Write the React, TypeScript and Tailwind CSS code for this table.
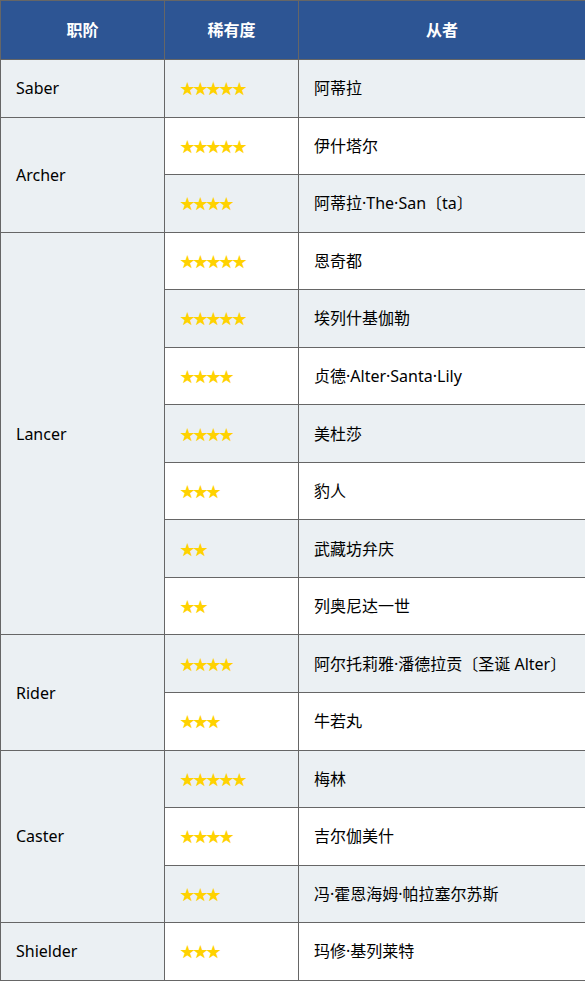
import React from 'react'

type Row = { cls?: string; span?: number; stars: number; name: string }

const rows: Row[] = [
  { cls: 'Saber', span: 1, stars: 5, name: '阿蒂拉' },
  { cls: 'Archer', span: 2, stars: 5, name: '伊什塔尔' },
  { stars: 4, name: '阿蒂拉·The·San〔ta〕' },
  { cls: 'Lancer', span: 7, stars: 5, name: '恩奇都' },
  { stars: 5, name: '埃列什基伽勒' },
  { stars: 4, name: '贞德·Alter·Santa·Lily' },
  { stars: 4, name: '美杜莎' },
  { stars: 3, name: '豹人' },
  { stars: 2, name: '武藏坊弁庆' },
  { stars: 2, name: '列奥尼达一世' },
  { cls: 'Rider', span: 2, stars: 4, name: '阿尔托莉雅·潘德拉贡〔圣诞 Alter〕' },
  { stars: 3, name: '牛若丸' },
  { cls: 'Caster', span: 3, stars: 5, name: '梅林' },
  { stars: 4, name: '吉尔伽美什' },
  { stars: 3, name: '冯·霍恩海姆·帕拉塞尔苏斯' },
  { cls: 'Shielder', span: 1, stars: 3, name: '玛修·基列莱特' },
]

export default function App() {
  return (
    <div className="w-[585px] h-[981px] bg-white font-['Noto_Sans','Noto_Sans_CJK_SC',sans-serif] text-[16px] text-black">
      <table className="w-[585px] border-collapse table-fixed">
        <colgroup>
          <col className="w-[164px]" />
          <col className="w-[134px]" />
          <col className="w-[287px]" />
        </colgroup>
        <thead>
          <tr className="h-[59px] bg-[#2d5594] text-white font-bold">
            <th className="border border-[#666] text-center">职阶</th>
            <th className="border border-[#666] text-center">稀有度</th>
            <th className="border border-[#666] text-center">从者</th>
          </tr>
        </thead>
        <tbody>
          {rows.map((r, i) => {
            const bg = i % 2 === 0 ? 'bg-[#ebf0f3]' : 'bg-white'
            return (
              <tr key={i} className="h-[57.56px]">
                {r.cls && (
                  <td
                    rowSpan={r.span}
                    className="border border-[#666] bg-[#ebf0f3] pl-[15px] align-middle"
                  >
                    {r.cls}
                  </td>
                )}
                <td className={`border border-[#666] pl-[15px] align-middle ${bg}`}>
                  <span className="text-[#ffd200] text-[15px] tracking-[-2px] font-['Noto_Sans_CJK_SC',sans-serif]">
                    {'★'.repeat(r.stars)}
                  </span>
                </td>
                <td className={`border border-[#666] pl-[15px] align-middle ${bg}`}>{r.name}</td>
              </tr>
            )
          })}
        </tbody>
      </table>
    </div>
  )
}
